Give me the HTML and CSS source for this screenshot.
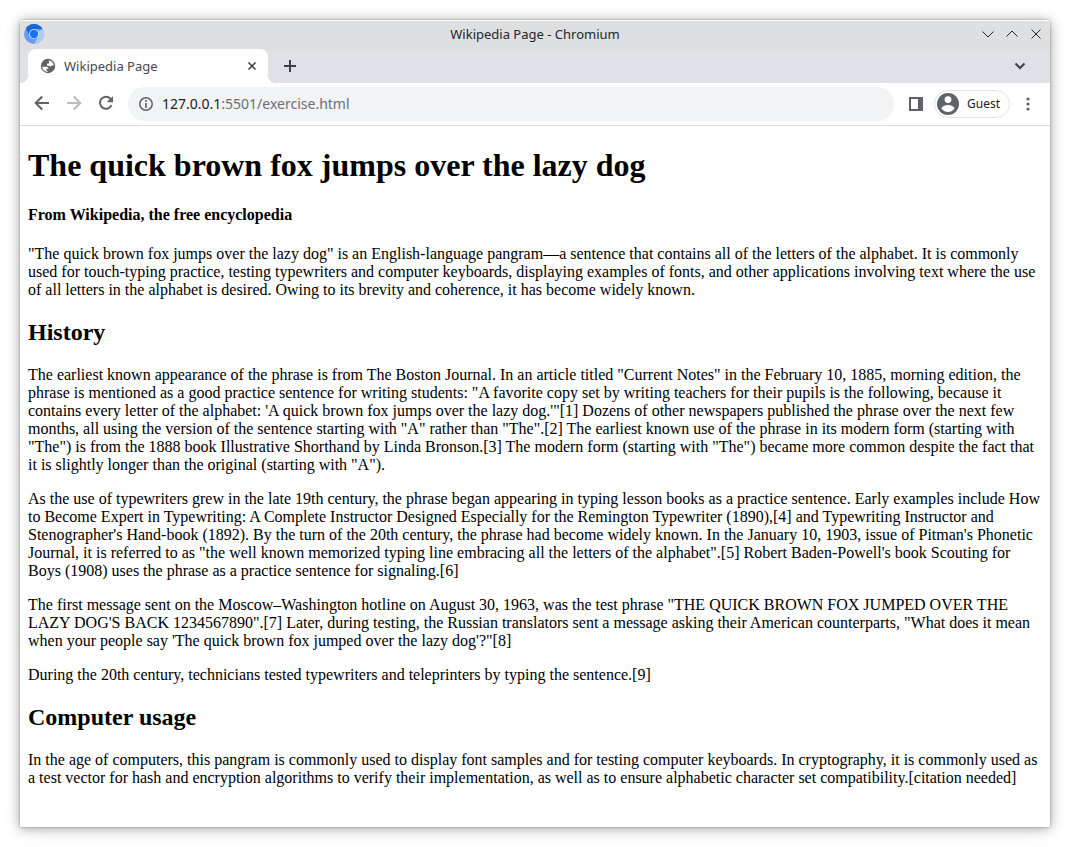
FILE: index.html
```html
<!DOCTYPE html>
<html lang="en">
<head>
<meta charset="utf-8">
<meta name="viewport" content="width=device-width, initial-scale=1">
<title>Wikipedia Page</title>
<link rel="stylesheet" href="styles.css">
</head>
<body>
<div class="window">
  <header class="titlebar">
    <svg class="app-logo" width="20" height="20" viewBox="0 0 20 20" aria-hidden="true">
      <circle cx="10" cy="10" r="10" fill="#669df6"/>
      <path d="M10 10 18.7 5A10 10 0 0 1 10 20L14.3 12.5z" fill="#aecbfa"/>
      <path d="M10 5H18.7A10 10 0 0 0 1.9 4.1L5.7 12.5z" fill="#1967d2"/>
      <circle cx="10" cy="10" r="5.100" fill="#d2e3fc"/>
      <circle cx="10" cy="10" r="4.200" fill="#1a73e8"/>
    </svg>
    <span class="window-title">Wikipedia Page - Chromium</span>
    <div class="window-controls">
      <button class="icon-button" aria-label="Minimize"><svg width="12" height="12" viewBox="0 0 12 12"><path d="M.5 3.5 6 9l5.500-5.500"/></svg></button>
      <button class="icon-button" aria-label="Maximize"><svg width="12" height="12" viewBox="0 0 12 12"><path d="M.5 8.500 6 3l5.500 5.500"/></svg></button>
      <button class="icon-button" aria-label="Close window"><svg width="12" height="12" viewBox="0 0 12 12"><path d="M1.500 1.500l9 9m0-9-9 9"/></svg></button>
    </div>
  </header>
  <div class="tabstrip">
    <div class="tab">
      <svg width="20" height="20" viewBox="0 0 24 24" aria-hidden="true"><circle cx="12" cy="12" r="8.600" fill="#5f6368"/><path d="M13 5.200c3.100.5 5.600 3.200 5.900 6.300h-2.100c-.8 1.200-2.700 1.400-3.700.1h-2.300V9.300l2.500-.4z" fill="#fff"/><path d="M5.100 12.800h4.600c1.900.1 2.900 1 2.900 2.500H10.200v2.100l2.300 1.500c-3.900.2-7.100-2.400-7.400-6.100z" fill="#fff"/></svg>
      <span class="tab-title">Wikipedia Page</span>
      <button class="icon-button tab-close" aria-label="Close tab"><svg width="12" height="12" viewBox="0 0 12 12"><path d="M2.500 2.500l7 7m0-7-7 7"/></svg></button>
    </div>
    <button class="icon-button new-tab" aria-label="New tab"><svg width="12" height="12" viewBox="0 0 12 12"><path d="M6 0v12M0 6h12"/></svg></button>
    <button class="icon-button tab-search" aria-label="Search tabs"><svg width="12" height="12" viewBox="0 0 12 12"><path d="M1.500 3.500 6 8l4.500-4.500"/></svg></button>
  </div>
  <nav class="toolbar" aria-label="Browser toolbar">
    <div class="nav-buttons">
      <button class="icon-button" aria-label="Back"><svg width="20" height="20" viewBox="0 0 20 20"><path d="M17 9H4M10.200 2.500 3.700 9l6.500 6.500"/></svg></button>
      <button class="icon-button forward" aria-label="Forward" disabled><svg width="20" height="20" viewBox="0 0 20 20"><path d="M3 9h13M9.800 2.500l6.500 6.500-6.500 6.500"/></svg></button>
      <button class="icon-button" aria-label="Reload"><svg width="20" height="20" viewBox="0 0 20 20"><path d="M15.500 11.200a6 6 0 1 1-1-6.400L16 6.500"/><path class="solid" d="M17 2v6.300h-6.300z"/></svg></button>
    </div>
    <div class="address">
      <svg width="16" height="16" viewBox="0 0 16 16" aria-hidden="true"><circle cx="8" cy="8" r="6.200" fill="none" stroke="#5f6368" stroke-width="1.500"/><path d="M8 7v5M8 4v2" stroke="#5f6368" stroke-width="1.600"/></svg>
      <a class="url" href="http://127.0.0.1:5501/exercise.html"><span class="host">127.0.0.1</span>:5501/exercise.html</a>
    </div>
    <button class="icon-button side-panel" aria-label="Side panel"><svg width="14" height="14" viewBox="0 0 14 14"><path class="solid" d="M0 0h14v14H0zM2 2v10h7V2z" fill-rule="evenodd"/></svg></button>
    <button class="profile"><svg width="22" height="22" viewBox="0 0 22 22" aria-hidden="true"><circle cx="11" cy="11" r="11" fill="#5f6368"/><circle cx="11" cy="6.600" r="3.400" fill="#fff"/><path d="M4.400 15.200c1.300-2 3.900-3.200 6.600-3.200s5.300 1.200 6.600 3.200c-1.300 2.200-3.800 3.700-6.600 3.700s-5.300-1.500-6.600-3.700z" fill="#fff"/></svg>Guest</button>
    <button class="icon-button menu" aria-label="Menu"><svg width="4" height="14" viewBox="0 0 4 14"><g class="solid"><circle cx="2" cy="2" r="1.600"/><circle cx="2" cy="7" r="1.600"/><circle cx="2" cy="12" r="1.600"/></g></svg></button>
  </nav>
  <main class="page">
    <h1>The quick brown fox jumps over the lazy dog</h1>
    <h4>From Wikipedia, the free encyclopedia</h4>
    <p>"The quick brown fox jumps over the lazy dog" is an English-language pangram—a sentence that contains all of the letters of the alphabet. It is commonly used for touch-typing practice, testing typewriters and computer keyboards, displaying examples of fonts, and other applications involving text where the use of all letters in the alphabet is desired. Owing to its brevity and coherence, it has become widely known.</p>
    <h2>History</h2>
    <p>The earliest known appearance of the phrase is from The Boston Journal. In an article titled "Current Notes" in the February 10, 1885, morning edition, the phrase is mentioned as a good practice sentence for writing students: "A favorite copy set by writing teachers for their pupils is the following, because it contains every letter of the alphabet: 'A quick brown fox jumps over the lazy dog.'"[1] Dozens of other newspapers published the phrase over the next few months, all using the version of the sentence starting with "A" rather than "The".[2] The earliest known use of the phrase in its modern form (starting with "The") is from the 1888 book Illustrative Shorthand by Linda Bronson.[3] The modern form (starting with "The") became more common despite the fact that it is slightly longer than the original (starting with "A").</p>
    <p>As the use of typewriters grew in the late 19th century, the phrase began appearing in typing lesson books as a practice sentence. Early examples include How to Become Expert in Typewriting: A Complete Instructor Designed Especially for the Remington Typewriter (1890),[4] and Typewriting Instructor and Stenographer's Hand-book (1892). By the turn of the 20th century, the phrase had become widely known. In the January 10, 1903, issue of Pitman's Phonetic Journal, it is referred to as "the well known memorized typing line embracing all the letters of the alphabet".[5] Robert Baden-Powell's book Scouting for Boys (1908) uses the phrase as a practice sentence for signaling.[6]</p>
    <p>The first message sent on the Moscow–Washington hotline on August 30, 1963, was the test phrase "THE QUICK BROWN FOX JUMPED OVER THE LAZY DOG'S BACK 1234567890".[7] Later, during testing, the Russian translators sent a message asking their American counterparts, "What does it mean when your people say 'The quick brown fox jumped over the lazy dog'?"[8]</p>
    <p>During the 20th century, technicians tested typewriters and teleprinters by typing the sentence.[9]</p>
    <h2>Computer usage</h2>
    <p>In the age of computers, this pangram is commonly used to display font samples and for testing computer keyboards. In cryptography, it is commonly used as a test vector for hash and encryption algorithms to verify their implementation, as well as to ensure alphabetic character set compatibility.[citation needed]</p>
  </main>
</div>
</body>
</html>
```
FILE: styles.css
```css
* {
  box-sizing: border-box;
}

body {
  display: flex;
  min-height: 100vh;
  margin: 0;
  padding: 20px;
  background: #fff;
  font-family: "Noto Sans", sans-serif;
}

.window {
  display: flex;
  flex: 1;
  flex-direction: column;
  min-width: 0;
  border-radius: 4px 4px 0 0;
  background: #fff;
  box-shadow: 0 0 2px rgba(0, 0, 0, 0.4), 0 1px 12px rgba(0, 0, 0, 0.35), 0 4px 24px rgba(0, 0, 0, 0.06);
}

svg {
  display: block;
  flex: none;
}

.icon-button {
  display: flex;
  align-items: center;
  justify-content: center;
  padding: 0;
  border: 0;
  background: none;
  color: #5f6368;
}

.icon-button path {
  fill: none;
  stroke: currentColor;
  stroke-width: 2;
}

.icon-button .solid {
  fill: currentColor;
  stroke: none;
}

.titlebar {
  display: grid;
  grid-template-columns: 1fr auto 1fr;
  align-items: center;
  height: 29px;
  padding: 0 4px 2px;
  border-top: 1px solid #fff;
  border-radius: 4px 4px 0 0;
  background: #dedfe1;
}

.window-title {
  color: #232629;
  font-size: 13px;
  line-height: 18px;
}

.window-controls {
  display: flex;
  justify-content: flex-end;
  gap: 12px;
  padding-right: 4px;
}

.window-controls .icon-button {
  color: #232629;
}

.window-controls path {
  stroke-width: 1;
}

.tabstrip {
  display: flex;
  align-items: center;
  height: 34px;
  padding: 0 24px 0 8px;
  background: #dee1e6;
}

.tab {
  position: relative;
  display: flex;
  align-items: center;
  width: 240px;
  height: 34px;
  padding: 0 10px;
  border-radius: 8px 8px 0 0;
  background: #fff;
}

.tab::before,
.tab::after {
  position: absolute;
  bottom: 0;
  width: 8px;
  height: 8px;
  content: "";
}

.tab::before {
  right: 100%;
  background: radial-gradient(circle at 0 0, #dee1e6 8px, #fff 8px);
}

.tab::after {
  left: 100%;
  background: radial-gradient(circle at 100% 0, #dee1e6 8px, #fff 8px);
}

.tab-title {
  flex: 1;
  margin-left: 6px;
  color: #45494d;
  font-size: 13px;
  line-height: 18px;
}

.tab-close path {
  stroke: #3c4043;
  stroke-width: 1.5;
}

.new-tab {
  margin-left: 16px;
  color: #3c4043;
}

.tab-search {
  margin-left: auto;
  color: #3c4043;
}

.toolbar {
  display: flex;
  align-items: center;
  height: 43px;
  padding: 0 20px 0 12px;
  border-bottom: 1px solid #dadce0;
}

.nav-buttons {
  display: flex;
  gap: 12px;
}

.forward {
  color: #babcbe;
}

.address {
  display: flex;
  flex: 1;
  align-items: center;
  gap: 8px;
  min-width: 0;
  height: 34px;
  margin-left: 12px;
  padding: 0 10px;
  border-radius: 17px;
  background: #f1f3f4;
}

.url {
  color: #6b6f74;
  font-size: 14px;
  line-height: 20px;
  text-decoration: none;
}

.host {
  color: #202124;
}

.side-panel {
  margin-left: 15px;
}

.profile {
  display: flex;
  align-items: center;
  gap: 8px;
  height: 28px;
  margin-left: 11px;
  padding: 0 9px 0 2px;
  border: 1px solid #e3e5e8;
  border-radius: 14px;
  background: #fff;
  color: #202124;
  font-family: inherit;
  font-size: 12px;
  line-height: 18px;
}

.menu {
  margin-left: 16px;
}

.page {
  flex: 1;
  padding: 1px 8px 24px;
  color: #000;
  font-family: "Liberation Serif", serif;
  font-size: 16px;
  line-height: 18px;
}

.page h1 {
  margin: 20px 0 23px;
  font-size: 32px;
  line-height: 36px;
}

.page h4 {
  margin: 21px 0;
  font-size: 16px;
}

.page h2 {
  margin: 20px 0;
  font-size: 24px;
  line-height: 27px;
}

.page p {
  margin: 16px 0;
}
```
